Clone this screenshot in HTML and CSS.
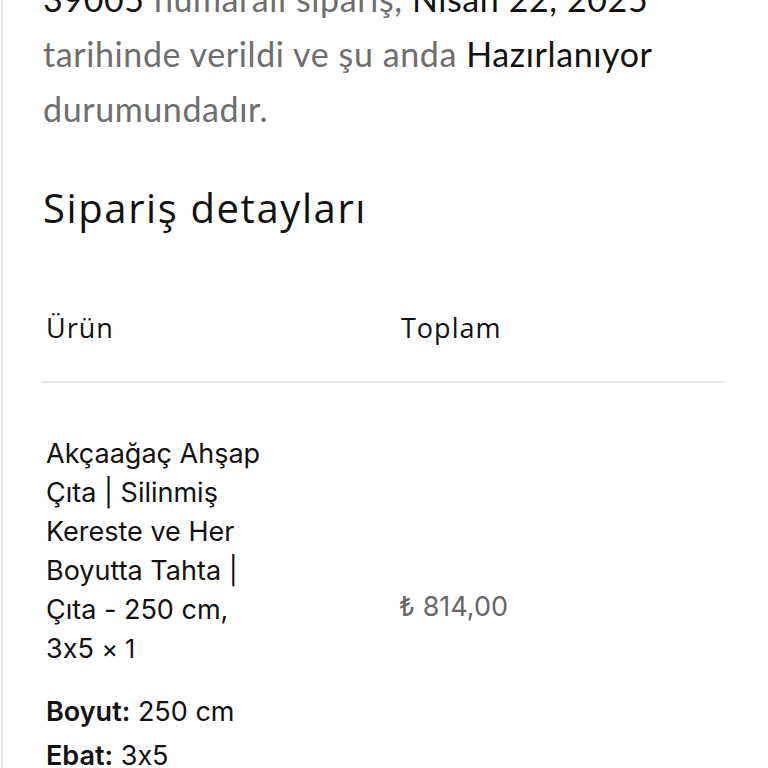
FILE: index.html
```html
<!DOCTYPE html>
<html lang="tr">
<head>
<meta charset="utf-8">
<link rel="stylesheet" href="styles.css">
</head>
<body>
<div class="page">
  <p class="intro"><mark class="hl">39005</mark> numaralı sipariş, <mark class="hl">Nisan 22, 2025</mark> tarihinde verildi ve şu anda <mark class="hl">Hazırlanıyor</mark> durumundadır.</p>
  <h2 class="title">Sipariş detayları</h2>
  <div class="table">
    <div class="head">
      <div class="th">Ürün</div>
      <div class="th">Toplam</div>
    </div>
    <div class="row">
      <div class="product">
        <div class="name">Akçaağaç Ahşap Çıta | Silinmiş Kereste ve Her Boyutta Tahta | Çıta - 250 cm, <span class="nowrap">3x5 <span class="qty">×&nbsp;1</span></span></div>
        <ul class="meta">
          <li><strong>Boyut:</strong> 250 cm</li>
          <li><strong>Ebat:</strong> 3x5</li>
        </ul>
      </div>
      <div class="price">₺ 814,00</div>
    </div>
  </div>
</div>
</body>
</html>
```

FILE: styles.css
```css
html, body {
  margin: 0;
  padding: 0;
  background: #ffffff;
  overflow: hidden;
}

.page {
  margin-left: 1px;
  border-left: 2px solid #ececec;
  padding: 0 42px 0 40px;
  min-height: 900px;
}

.intro {
  margin: -29px 0 0;
  max-width: 640px;
  font-family: "Lato", sans-serif;
  font-size: 34px;
  line-height: 55px;
  letter-spacing: 0.6px;
  color: #6e6e6e;
}

.hl {
  background: none;
  color: #111111;
}

.title {
  margin: 47px 0 0;
  font-family: "Open Sans", sans-serif;
  font-weight: 400;
  font-size: 40px;
  line-height: 50px;
  letter-spacing: 1.6px;
  color: #111111;
}

.table {
  margin-top: 75px;
  margin-left: -1px;
  width: 683px;
}

.head {
  display: grid;
  grid-template-columns: 355px 1fr;
  border-bottom: 2px solid #e8e8e8;
  padding: 0 0 33px 4px;
}

.th {
  font-family: "Open Sans", sans-serif;
  font-size: 27px;
  line-height: 40px;
  letter-spacing: 1px;
  color: #111111;
}

.row {
  display: grid;
  grid-template-columns: 353px 1fr;
  align-items: center;
  padding: 51px 0 0 4px;
}

.name {
  width: 222px;
  font-family: "Inter", sans-serif;
  font-feature-settings: "calt" 0;
  font-size: 27px;
  line-height: 39px;
  color: #111111;
}

.nowrap {
  white-space: nowrap;
}

.qty {
  font-size: 25px;
}

.meta {
  list-style: none;
  margin: 21px 0 0;
  padding: 0;
  font-family: "Inter", sans-serif;
  font-feature-settings: "calt" 0;
  font-size: 27px;
  line-height: 44px;
  color: #111111;
}

.meta strong {
  font-weight: 600;
}

.price {
  font-family: "Inter", sans-serif;
  font-size: 27px;
  color: #666666;
}
```
